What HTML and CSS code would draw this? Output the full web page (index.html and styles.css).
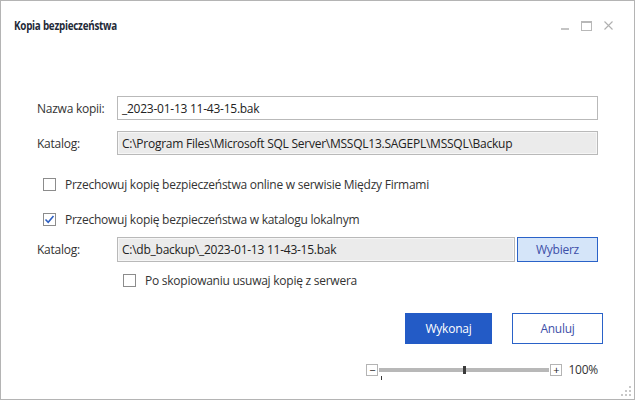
FILE: index.html
```html
<!DOCTYPE html>
<html lang="pl">
<head>
<meta charset="utf-8">
<title>Kopia bezpieczeństwa</title>
<link rel="stylesheet" href="styles.css">
</head>
<body>
<div class="window">
  <div class="header">
    <div class="title">Kopia bezpieczeństwa</div>
    <div class="controls">
      <span class="ctl min"></span>
      <span class="ctl max"></span>
      <svg class="ctl close" width="9" height="9" viewBox="0 0 9 9"><path d="M0.5 0.5 L8.5 8.5 M8.5 0.5 L0.5 8.5" stroke="#b0b0b0" stroke-width="1.1" fill="none"/></svg>
    </div>
  </div>
  <div class="content">
    <div class="row r1">
      <label class="lbl">Nazwa kopii:</label>
      <div class="field white">_2023-01-13 11-43-15.bak</div>
    </div>
    <div class="row r2">
      <label class="lbl">Katalog:</label>
      <div class="field gray">C:\Program Files\Microsoft SQL Server\MSSQL13.SAGEPL\MSSQL\Backup</div>
    </div>
    <div class="check c1">
      <span class="box"></span>
      <span class="ctext">Przechowuj kopię bezpieczeństwa online w serwisie Między Firmami</span>
    </div>
    <div class="check c2">
      <span class="box"><svg width="13" height="13" viewBox="0 0 13 13"><path d="M2.5 6.5 L5.2 9.2 L10.5 3" stroke="#2d5fc2" stroke-width="1.6" fill="none"/></svg></span>
      <span class="ctext">Przechowuj kopię bezpieczeństwa w katalogu lokalnym</span>
    </div>
    <div class="row r3">
      <label class="lbl">Katalog:</label>
      <div class="field gray tall">C:\db_backup\_2023-01-13 11-43-15.bak</div>
      <button class="pick">Wybierz</button>
    </div>
    <div class="check c3">
      <span class="box"></span>
      <span class="ctext">Po skopiowaniu usuwaj kopię z serwera</span>
    </div>
    <div class="actions">
      <button class="btn primary">Wykonaj</button>
      <button class="btn secondary">Anuluj</button>
    </div>
    <div class="zoom">
      <span class="zbtn">−</span>
      <div class="track">
        <span class="thumb"></span>
        <span class="tick"></span>
      </div>
      <span class="zbtn">+</span>
      <span class="pct">100%</span>
    </div>
  </div>
  <svg class="grip" width="12" height="12" viewBox="0 0 12 12">
    <rect x="9" y="1" width="2" height="2" fill="#c8c8c8"/>
    <rect x="5" y="5" width="2" height="2" fill="#c8c8c8"/>
    <rect x="9" y="5" width="2" height="2" fill="#c8c8c8"/>
    <rect x="1" y="9" width="2" height="2" fill="#c8c8c8"/>
    <rect x="5" y="9" width="2" height="2" fill="#c8c8c8"/>
    <rect x="9" y="9" width="2" height="2" fill="#c8c8c8"/>
  </svg>
</div>
</body>
</html>
```
FILE: styles.css
```css
html, body {
  margin: 0;
  padding: 0;
  background: #fff;
}
body {
  font-family: "Open Sans", "Noto Sans", sans-serif;
  font-size: 12px;
  color: #2b2b2b;
}
.window {
  position: relative;
  width: 635px;
  height: 400px;
  box-sizing: border-box;
  border: 1px solid #b4b4b4;
  background: #fff;
}
.header {
  height: 49px;
  display: flex;
  align-items: center;
  justify-content: space-between;
  padding: 0 21px 0 13px;
}
.title {
  font-weight: 700;
  font-size: 12px;
  color: #1f2a38;
  letter-spacing: -0.3px;
  transform: scaleX(0.82);
  transform-origin: left center;
}
.controls {
  display: flex;
  align-items: center;
  gap: 12px;
}
.ctl {
  display: block;
}
.min {
  width: 8px;
  height: 2px;
  background: #c4c4c4;
  margin-top: 6px;
}
.max {
  width: 9px;
  height: 7px;
  border: 1px solid #b8b8b8;
  border-top-width: 2px;
}
.content {
  padding: 0 36px;
}
.row {
  display: flex;
  align-items: center;
}
.lbl {
  width: 80px;
  flex: none;
  color: #333;
  letter-spacing: -0.25px;
}
.field {
  flex: 1;
  height: 24px;
  box-sizing: border-box;
  border: 1px solid #b9b9b9;
  padding: 0 4px;
  display: flex;
  align-items: center;
  color: #222;
  white-space: nowrap;
  overflow: hidden;
  letter-spacing: -0.25px;
}
.white { background: #fff; }
.gray {
  background: #ebebeb;
  box-shadow: inset 0 0 0 1px #f6f6f6;
}
.tall { height: 25px; }
.r1 { margin-top: 46px; }
.r2 { margin-top: 11px; }
.check {
  display: flex;
  align-items: center;
  height: 13px;
  margin-left: 6px;
}
.box {
  width: 13px;
  height: 13px;
  box-sizing: border-box;
  border: 1px solid #8c8c8c;
  background: #fff;
  flex: none;
  position: relative;
}
.box svg {
  position: absolute;
  left: -1px;
  top: -1px;
}
.ctext {
  margin-left: 9px;
  color: #333;
  white-space: nowrap;
  letter-spacing: -0.25px;
}
.c1 { margin-top: 23px; }
.c2 { margin-top: 22px; }
.r3 { margin-top: 11px; }
.pick {
  width: 81px;
  height: 25px;
  margin-left: 2px;
  flex: none;
  background: #d5e5f9;
  border: 1px solid #2a62c8;
  color: #3d4fa8;
  font-family: inherit;
  font-size: 12px;
  letter-spacing: -0.25px;
  padding: 0;
}
.c3 {
  margin-top: 12px;
  margin-left: 86px;
}
.actions {
  display: flex;
  justify-content: flex-end;
  gap: 20px;
  margin-top: 26px;
  margin-right: -5px;
}
.btn {
  height: 31px;
  font-family: inherit;
  font-size: 12px;
  letter-spacing: -0.25px;
  padding: 0;
}
.primary {
  width: 87px;
  background: #235bc6;
  border: 1px solid #235bc6;
  color: #fff;
}
.secondary {
  width: 91px;
  background: #fff;
  border: 1px solid #2a62c8;
  color: #3d4fa8;
}
.zoom {
  display: flex;
  align-items: center;
  justify-content: flex-end;
  margin-top: 19px;
  height: 13px;
}
.zbtn {
  width: 12px;
  height: 12px;
  box-sizing: border-box;
  border: 1px solid #b4b4b4;
  display: flex;
  align-items: center;
  justify-content: center;
  font-size: 11px;
  line-height: 1;
  color: #222;
}
.track {
  position: relative;
  width: 170px;
  height: 4px;
  background: #b8b8b8;
  margin: 0 1px;
}
.thumb {
  position: absolute;
  left: 84px;
  top: -2px;
  width: 3px;
  height: 8px;
  background: #3a3a3a;
}
.tick {
  position: absolute;
  left: 2px;
  top: 8px;
  width: 1px;
  height: 4px;
  background: #3a3a3a;
}
.pct {
  margin-left: 6px;
  color: #333;
  letter-spacing: -0.25px;
}
.grip {
  position: absolute;
  right: 2px;
  bottom: 2px;
}
```
